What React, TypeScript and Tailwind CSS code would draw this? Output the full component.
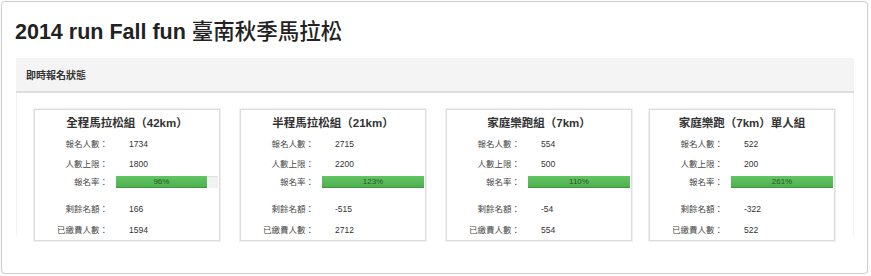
import React from "react";

const font = { fontFamily: '"Liberation Sans", "Noto Sans CJK TC", sans-serif' };

type Card = {
  title: string;
  signed: string;
  limit: string;
  rate: string;
  fill: number;
  remain: string;
  paid: string;
};

const cards: Card[] = [
  { title: "全程馬拉松組（42km）", signed: "1734", limit: "1800", rate: "96%", fill: 89, remain: "166", paid: "1594" },
  { title: "半程馬拉松組（21km）", signed: "2715", limit: "2200", rate: "123%", fill: 100, remain: "-515", paid: "2712" },
  { title: "家庭樂跑組（7km）", signed: "554", limit: "500", rate: "110%", fill: 100, remain: "-54", paid: "554" },
  { title: "家庭樂跑（7km）單人組", signed: "522", limit: "200", rate: "261%", fill: 100, remain: "-322", paid: "522" },
];

function Row({ label, value, className = "" }: { label: string; value: string; className?: string }) {
  return (
    <div className={"flex h-[20px] items-center " + className}>
      <div className="w-[73px] shrink-0 text-right text-[8.5px] text-[#4a4a4a]">{label}</div>
      <div className="ml-[21px] text-[8.5px] text-[#333]">{value}</div>
    </div>
  );
}

function StatCard({ c, className = "" }: { c: Card; className?: string }) {
  return (
    <div className={"h-[132px] w-[186px] shrink-0 border border-[#dcdcdc] bg-white shadow-[0_0_0_1px_#f0f0f0] " + className}>
      <div className="flex h-[24px] items-start justify-center pt-[6px]">
        <div className="text-[11.5px] font-bold leading-[14px] text-[#333]">{c.title}</div>
      </div>
      <Row label="報名人數：" value={c.signed} />
      <Row label="人數上限：" value={c.limit} />
      <div className="flex h-[16px] items-center">
        <div className="w-[73px] shrink-0 text-right text-[8.5px] text-[#4a4a4a]">報名率：</div>
        <div className="ml-[8px] h-[12px] w-[102px] bg-[#f2f2f2] shadow-[inset_0_1px_1px_rgba(0,0,0,0.08)]">
          <div
            className="flex h-full items-center justify-center bg-gradient-to-b from-[#62c462] to-[#4cae4c] text-[8px] leading-none text-[#2a552a] shadow-[inset_0_-1px_0_rgba(0,0,0,0.12)]"
            style={{ width: c.fill + "%" }}
          >
            {c.rate}
          </div>
        </div>
      </div>
      <Row label="剩餘名額：" value={c.remain} className="mt-[9px]" />
      <Row label="已繳費人數：" value={c.paid} className="mt-[1px]" />
    </div>
  );
}

export default function App() {
  return (
    <div style={font} className="h-[276px] w-[871px] bg-white p-[1px]">
      <div className="h-[273px] w-[867px] rounded-[4px] border border-[#cfcfcf] bg-white shadow-[0_0_2px_rgba(0,0,0,0.08)]">
        <h1 className="pl-[13px] pt-[17px] text-[21.5px] font-bold leading-[26px] text-[#222]">
          2014 run Fall fun <span className="font-medium">臺南秋季馬拉松</span>
        </h1>
        <div className="ml-[14px] mt-[13px] w-[838px]">
          <div className="flex h-[35px] items-center border-b-2 border-[#dedede] bg-[#f4f4f4] pl-[10px] pt-[1px] text-[10px] font-bold text-[#333]">
            即時報名狀態
          </div>
          <div className="h-[143px] border-x border-[#f2f2f2] pl-[17px] pt-[16px]">
            <div className="flex">
              <StatCard c={cards[0]} />
              <StatCard c={cards[1]} className="ml-[20px]" />
              <StatCard c={cards[2]} className="ml-[20px]" />
              <StatCard c={cards[3]} className="ml-[17px]" />
            </div>
          </div>
        </div>
      </div>
    </div>
  );
}
